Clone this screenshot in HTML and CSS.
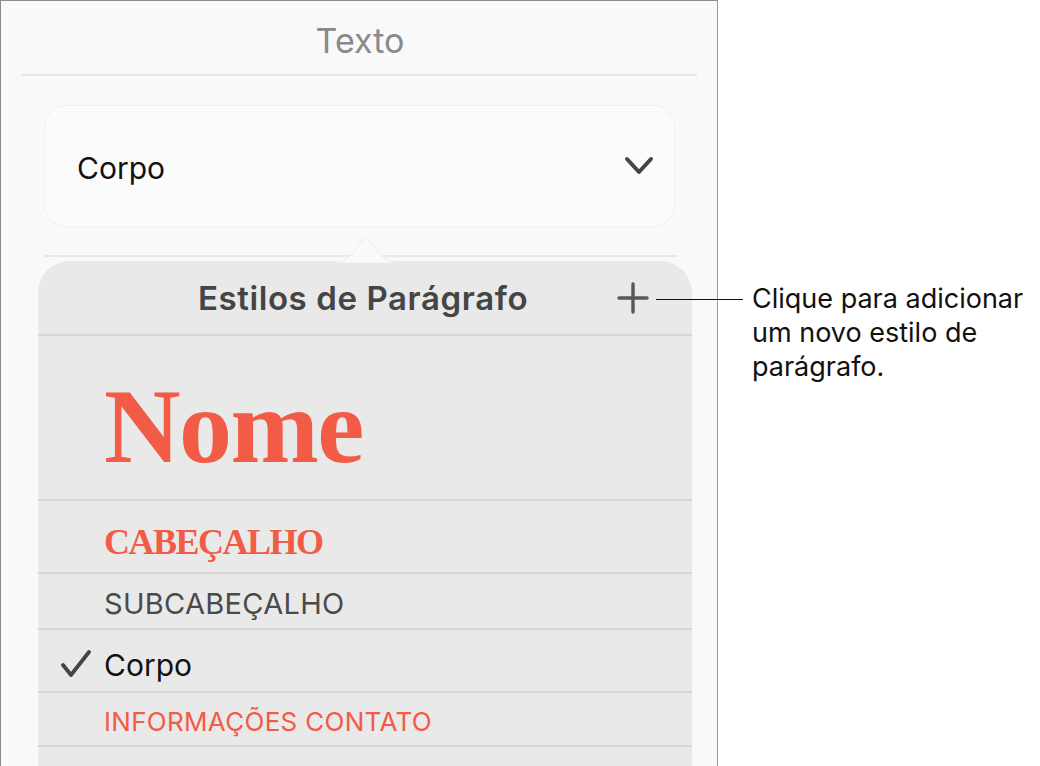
FILE: index.html
```html
<!DOCTYPE html>
<html lang="pt">
<head>
<meta charset="utf-8">
<title>Estilos de Parágrafo</title>
<link rel="stylesheet" href="styles.css">
</head>
<body>
<div class="page">
  <div class="panel">
    <div class="title">Texto</div>
    <div class="sep"></div>
    <div class="dropdown">
      <span class="dd-label">Corpo</span>
      <svg class="chevron" width="30" height="20" viewBox="0 0 30 20"><path d="M3 3 L15 16 L27 3" fill="none" stroke="#454545" stroke-width="4" stroke-linecap="round" stroke-linejoin="round"/></svg>
    </div>
    <div class="sep2"></div>
    <div class="popover">
      <svg class="arrow" width="72" height="32" viewBox="0 0 72 32"><path d="M0 32 C14 32 18 28 26 18 L32 10 C34 7 38 7 40 10 L46 18 C54 28 58 32 72 32 Z" fill="#fafafa" stroke="#eeeeee" stroke-width="1"/></svg>
      <div class="pop-head">
        <span class="pop-title">Estilos de Parágrafo</span>
        <svg class="plus" width="32" height="32" viewBox="0 0 32 32"><path d="M16 2 V30 M2 16 H30" stroke="#585858" stroke-width="3.4" stroke-linecap="round"/></svg>
      </div>
      <div class="row row-nome"><span class="nome">Nome</span></div>
      <div class="row row-cab"><span class="cab">CABEÇALHO</span></div>
      <div class="row row-sub"><span class="sub">SUBCABEÇALHO</span></div>
      <div class="row row-corpo">
        <svg class="check" width="32" height="28" viewBox="0 0 32 28"><path d="M3 15 L11 25 L29 2" fill="none" stroke="#454545" stroke-width="3.8" stroke-linecap="round" stroke-linejoin="round"/></svg>
        <span class="corpo">Corpo</span>
      </div>
      <div class="row row-info"><span class="info">INFORMAÇÕES CONTATO</span></div>
      <div class="row row-last"></div>
    </div>
  </div>
  <div class="callout">
    <div class="callout-line"></div>
    <div class="callout-text">Clique para adicionar<br>um novo estilo de<br>parágrafo.</div>
  </div>
</div>
</body>
</html>
```

FILE: styles.css
```css
html, body {
  margin: 0;
  padding: 0;
  background: #ffffff;
}
body {
  font-family: Inter, "Liberation Sans", sans-serif;
  width: 1040px;
  height: 766px;
  overflow: hidden;
}
.page {
  position: relative;
  width: 1040px;
  height: 766px;
}
.panel {
  width: 718px;
  height: 766px;
  box-sizing: border-box;
  background: #f9f9f9;
  border-left: 1px solid #8c8c8c;
  border-top: 1px solid #8c8c8c;
  border-right: 1px solid #9a9a9a;
  overflow: hidden;
  display: flex;
  flex-direction: column;
}
.panel > * {
  flex-shrink: 0;
}
.title {
  height: 73px;
  display: flex;
  align-items: center;
  justify-content: center;
  font-size: 34px;
  color: #8a8a8a;
  padding-left: 2px;
  padding-top: 6px;
  box-sizing: border-box;
}
.sep {
  height: 2px;
  background: #e6e6e6;
  margin: 0 20px 0 21px;
}
.dropdown {
  margin: 29px 42px 0 43px;
  height: 122px;
  box-sizing: border-box;
  border: 1px solid #f0f0f0;
  border-radius: 22px;
  background: #fbfbfb;
  display: flex;
  align-items: center;
  justify-content: space-between;
  padding: 4px 20px 0 32px;
}
.dd-label {
  font-size: 30px;
  color: #111;
  padding-bottom: 0;
}
.chevron {
  margin-top: -4px;
}
.sep2 {
  height: 2px;
  background: #e8e8e8;
  margin: 28px 40px 0 43px;
}
.popover {
  position: relative;
  margin: 4px 25px 0 37px;
  flex: 1 0 auto;
  background: #e9e9e9;
  border-radius: 32px 32px 0 0;
  display: flex;
  flex-direction: column;
}
.popover > * {
  flex-shrink: 0;
}
.arrow {
  position: absolute;
  left: 292px;
  top: -30px;
}
.pop-head {
  height: 75px;
  display: flex;
  align-items: center;
  justify-content: center;
  position: relative;
  border-bottom: 2px solid #d6d6d6;
  box-sizing: border-box;
}
.pop-title {
  font-size: 33px;
  font-weight: 600;
  color: #454545;
  letter-spacing: 0.6px;
  margin-top: 0;
  margin-left: -4px;
}
.plus {
  position: absolute;
  left: 579px;
  top: 21px;
}
.row {
  display: flex;
  align-items: center;
  padding-left: 66px;
  padding-top: 4px;
  border-bottom: 2px solid #d6d6d6;
  box-sizing: border-box;
  position: relative;
}
.row-nome { height: 165px; }
.row-cab { height: 73px; }
.row-sub { height: 56px; }
.row-corpo { height: 63px; }
.row-info { height: 54px; }
.row-last { height: 60px; border-bottom: none; }
.nome {
  font-family: "Liberation Serif", "DejaVu Serif", serif;
  font-weight: 700;
  font-size: 106px;
  color: #f25b45;
  letter-spacing: -1.5px;
  margin-top: 14px;
}
.cab {
  font-family: "Liberation Serif", "DejaVu Serif", serif;
  font-weight: 700;
  font-size: 36px;
  color: #f25b45;
  letter-spacing: -1.5px;
  margin-top: 6px;
}
.sub {
  font-size: 29px;
  color: #4a4a4a;
  letter-spacing: 0.3px;
}
.check {
  position: absolute;
  left: 22px;
  top: 20px;
}
.corpo {
  font-size: 30px;
  color: #111;
  margin-top: 4px;
}
.info {
  font-size: 26px;
  color: #f25b45;
  letter-spacing: 0.3px;
}
.callout {
  position: absolute;
  left: 656px;
  top: 282px;
  display: flex;
  align-items: flex-start;
}
.callout-line {
  width: 87px;
  height: 1px;
  background: #111;
  margin-top: 17px;
}
.callout-text {
  margin-left: 9px;
  font-size: 27px;
  line-height: 34px;
  color: #111;
}
```
